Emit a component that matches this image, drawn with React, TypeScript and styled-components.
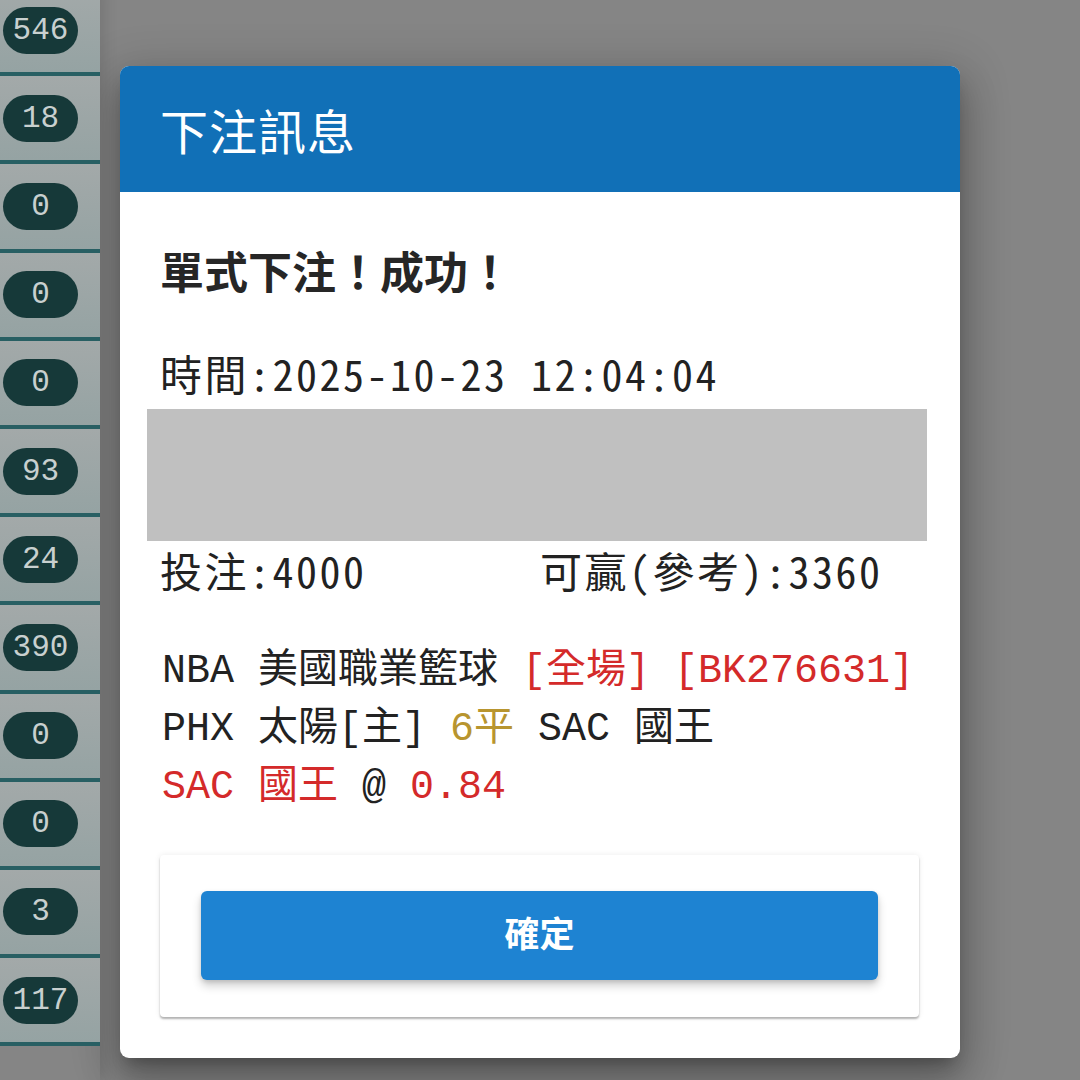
import React from "react";
import styled, { createGlobalStyle } from "styled-components";

const GlobalStyle = createGlobalStyle`
    html, body {
        margin: 0;
        padding: 0;
        background: #858585;
    }
    body {
        font-family: "Noto Sans CJK TC", "Noto Sans", sans-serif;
    }
`;

const Screen = styled.div`
    display: flex;
    width: 1080px;
    height: 1080px;
    overflow: hidden;
    background: #858585;
`;

const Sidebar = styled.div`
    width: 100px;
    flex-shrink: 0;
    display: flex;
    flex-direction: column;
    margin-top: -12px;
    box-shadow: 4px 0 14px rgba(0, 0, 0, 0.12);
    z-index: 1;
`;

const CountRow = styled.div`
    height: 84.2px;
    flex-shrink: 0;
    display: flex;
    align-items: center;
    padding-left: 3px;
    border-bottom: 4px solid #285f63;
    background: linear-gradient(180deg, #a3a9a9 0%, #95a3a3 100%);
`;

const CountPill = styled.div`
    width: 75px;
    height: 47px;
    border-radius: 24px;
    background: #163939;
    color: #c8d0cf;
    font-family: "Liberation Mono", monospace;
    font-size: 31px;
    display: flex;
    align-items: center;
    justify-content: center;
`;

const DialogArea = styled.div`
    flex: 1;
    padding: 66px 0 0 20px;
`;

const Dialog = styled.div`
    width: 840px;
    height: 992px;
    background: #ffffff;
    border-radius: 9px;
    overflow: hidden;
    display: flex;
    flex-direction: column;
    box-shadow: 0 11px 15px -7px rgba(0, 0, 0, 0.25),
        0 24px 38px 3px rgba(0, 0, 0, 0.2), 0 9px 46px 8px rgba(0, 0, 0, 0.16);
`;

const DialogHeader = styled.div`
    height: 126px;
    background: #1170b7;
    display: flex;
    align-items: center;
    padding-left: 40px;
    color: #ffffff;
    font-size: 48px;
    font-weight: 400;
    letter-spacing: 1px;
`;

const DialogBody = styled.div`
    display: flex;
    flex-direction: column;
    padding: 48px 42px 0 40px;
    color: #222222;
`;

const Headline = styled.div`
    font-size: 44px;
    font-weight: 700;
    line-height: 60px;
    height: 60px;
    color: #262626;
`;

const InfoLine = styled.div<{ gap?: number }>`
    font-family: "Noto Sans Mono CJK TC", "Noto Sans CJK TC", monospace;
    font-size: 42px;
    letter-spacing: 2.5px;
    line-height: 50px;
    height: 50px;
    margin-top: ${(props) => props.gap ?? 0}px;
    display: flex;
    white-space: pre;
`;

const InfoCell = styled.span<{ width?: number }>`
    width: ${(props) => (props.width ? `${props.width}px` : "auto")};
`;

const Redacted = styled.div`
    height: 132px;
    margin: 11px -9px 4px -13px;
    background: #c0c0c0;
`;

const MatchBlock = styled.div`
    margin-top: 48px;
    font-family: "Liberation Mono", "Noto Sans CJK TC", monospace;
    font-size: 40px;
    line-height: 58px;
    white-space: pre;
    padding-left: 2px;
`;

const MatchLine = styled.div`
    height: 58px;
`;

const Tone = styled.span<{ tone: "red" | "gold" | "dark" }>`
    color: ${(props) =>
        props.tone === "red"
            ? "#d42a2a"
            : props.tone === "gold"
            ? "#b8952f"
            : "#222222"};
`;

const ActionCard = styled.div`
    margin: 38px -1px 0 0;
    height: 162px;
    box-sizing: border-box;
    padding: 36px 41px 0 41px;
    background: #ffffff;
    border-radius: 4px;
    box-shadow: 0 2px 2px rgba(0, 0, 0, 0.28), 0 0 6px rgba(0, 0, 0, 0.08);
`;

const ConfirmButton = styled.button`
    width: 100%;
    height: 89px;
    border: none;
    border-radius: 6px;
    padding: 0 0 8px 0;
    background: #1e83d2;
    color: #ffffff;
    font-family: "Noto Sans CJK TC", sans-serif;
    font-size: 35px;
    font-weight: 700;
    box-shadow: 0 6px 10px rgba(0, 0, 0, 0.18), 0 2px 4px rgba(0, 0, 0, 0.12);
    cursor: pointer;
`;

const COUNTS = ["546", "18", "0", "0", "0", "93", "24", "390", "0", "0", "3", "117"];

const App = () => {
    return (
        <>
            <GlobalStyle />
            <Screen>
                <Sidebar>
                    {COUNTS.map((count, i) => (
                        <CountRow key={i}>
                            <CountPill>{count}</CountPill>
                        </CountRow>
                    ))}
                </Sidebar>
                <DialogArea>
                    <Dialog>
                        <DialogHeader>下注訊息</DialogHeader>
                        <DialogBody>
                            <Headline>單式下注！成功！</Headline>
                            <InfoLine gap={48}>時間:2025-10-23 12:04:04</InfoLine>
                            <Redacted />
                            <InfoLine>
                                <InfoCell width={380}>投注:4000</InfoCell>
                                <InfoCell>可贏(參考):3360</InfoCell>
                            </InfoLine>
                            <MatchBlock>
                                <MatchLine>
                                    NBA 美國職業籃球 <Tone tone="red">[全場]</Tone>{" "}
                                    <Tone tone="red">[BK276631]</Tone>
                                </MatchLine>
                                <MatchLine>
                                    PHX 太陽[主] <Tone tone="gold">6平</Tone> SAC 國王
                                </MatchLine>
                                <MatchLine>
                                    <Tone tone="red">SAC 國王</Tone> @{" "}
                                    <Tone tone="red">0.84</Tone>
                                </MatchLine>
                            </MatchBlock>
                            <ActionCard>
                                <ConfirmButton>確定</ConfirmButton>
                            </ActionCard>
                        </DialogBody>
                    </Dialog>
                </DialogArea>
            </Screen>
        </>
    );
};

export default App;
